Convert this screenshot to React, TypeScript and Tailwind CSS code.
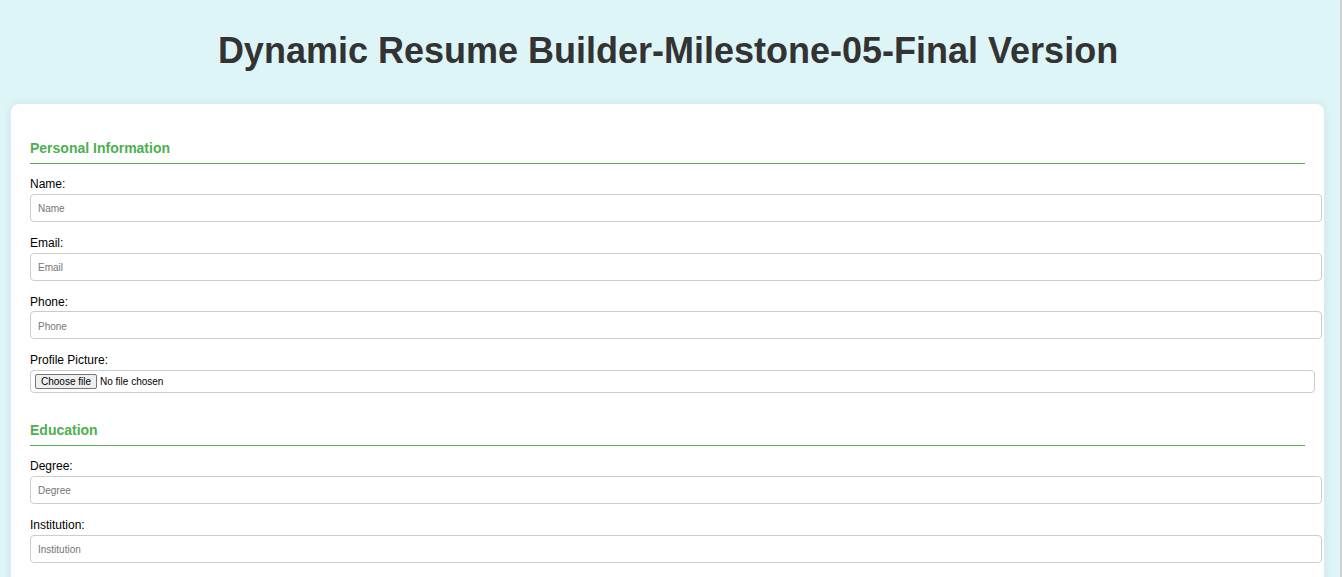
import React from "react";

const font = { fontFamily: '"Liberation Sans", Arial, sans-serif' };

function Heading({ children }: { children: React.ReactNode }) {
  return (
    <h3 className="text-[14px] leading-[16px] font-bold text-[#4caf50] pb-[7px] border-b border-[#4caf50] mb-[14px]">
      {children}
    </h3>
  );
}

function Field({ label, placeholder }: { label: string; placeholder: string }) {
  return (
    <div className="mb-[15px]">
      <label className="block text-[12px] leading-[13.8px] text-black mb-[2px]">{label}</label>
      <input
        type="text"
        placeholder={placeholder}
        className="block w-[1292px] h-[28px] border border-[#cccccc] rounded-[4px] pl-[7px] pr-[8px] pt-[2px] text-[10px] placeholder:text-[#757575] outline-none bg-white"
        style={font}
      />
    </div>
  );
}

export default function App() {
  return (
    <div className="w-[1342px] min-h-[577px] flex" style={font}>
      <div className="w-[1340px] bg-[#def5f8] pt-[30px] pb-[20px]">
        <h1 className="text-center text-[36px] leading-[41px] font-bold text-[#333333] pr-[4px]">
          Dynamic Resume Builder-Milestone-05-Final Version
        </h1>
        <div className="mt-[33px] ml-[11px] w-[1313px] bg-white rounded-[8px] shadow-[0_0_10px_rgba(0,0,0,0.08)] pt-[36px] px-[19px] pb-[20px]">
          <Heading>Personal Information</Heading>
          <Field label="Name:" placeholder="Name" />
          <Field label="Email:" placeholder="Email" />
          <Field label="Phone:" placeholder="Phone" />
          <div>
            <label className="block text-[12px] leading-[13.8px] text-black mb-[2px]">Profile Picture:</label>
            <div className="w-[1285px] h-[23px] border border-[#cccccc] rounded-[4px] px-[4px] flex items-center">
              <span className="h-[15px] px-[5px] border border-[#767676] bg-[#efefef] rounded-[2px] text-[10px] leading-[13px] text-black flex items-center">
                Choose file
              </span>
              <span className="ml-[3px] text-[10px] text-black">No file chosen</span>
            </div>
          </div>
          <div className="mt-[29px]">
            <Heading>Education</Heading>
            <Field label="Degree:" placeholder="Degree" />
            <Field label="Institution:" placeholder="Institution" />
          </div>
        </div>
      </div>
      <div className="w-[2px] bg-[#d0d0d0]" />
    </div>
  );
}
